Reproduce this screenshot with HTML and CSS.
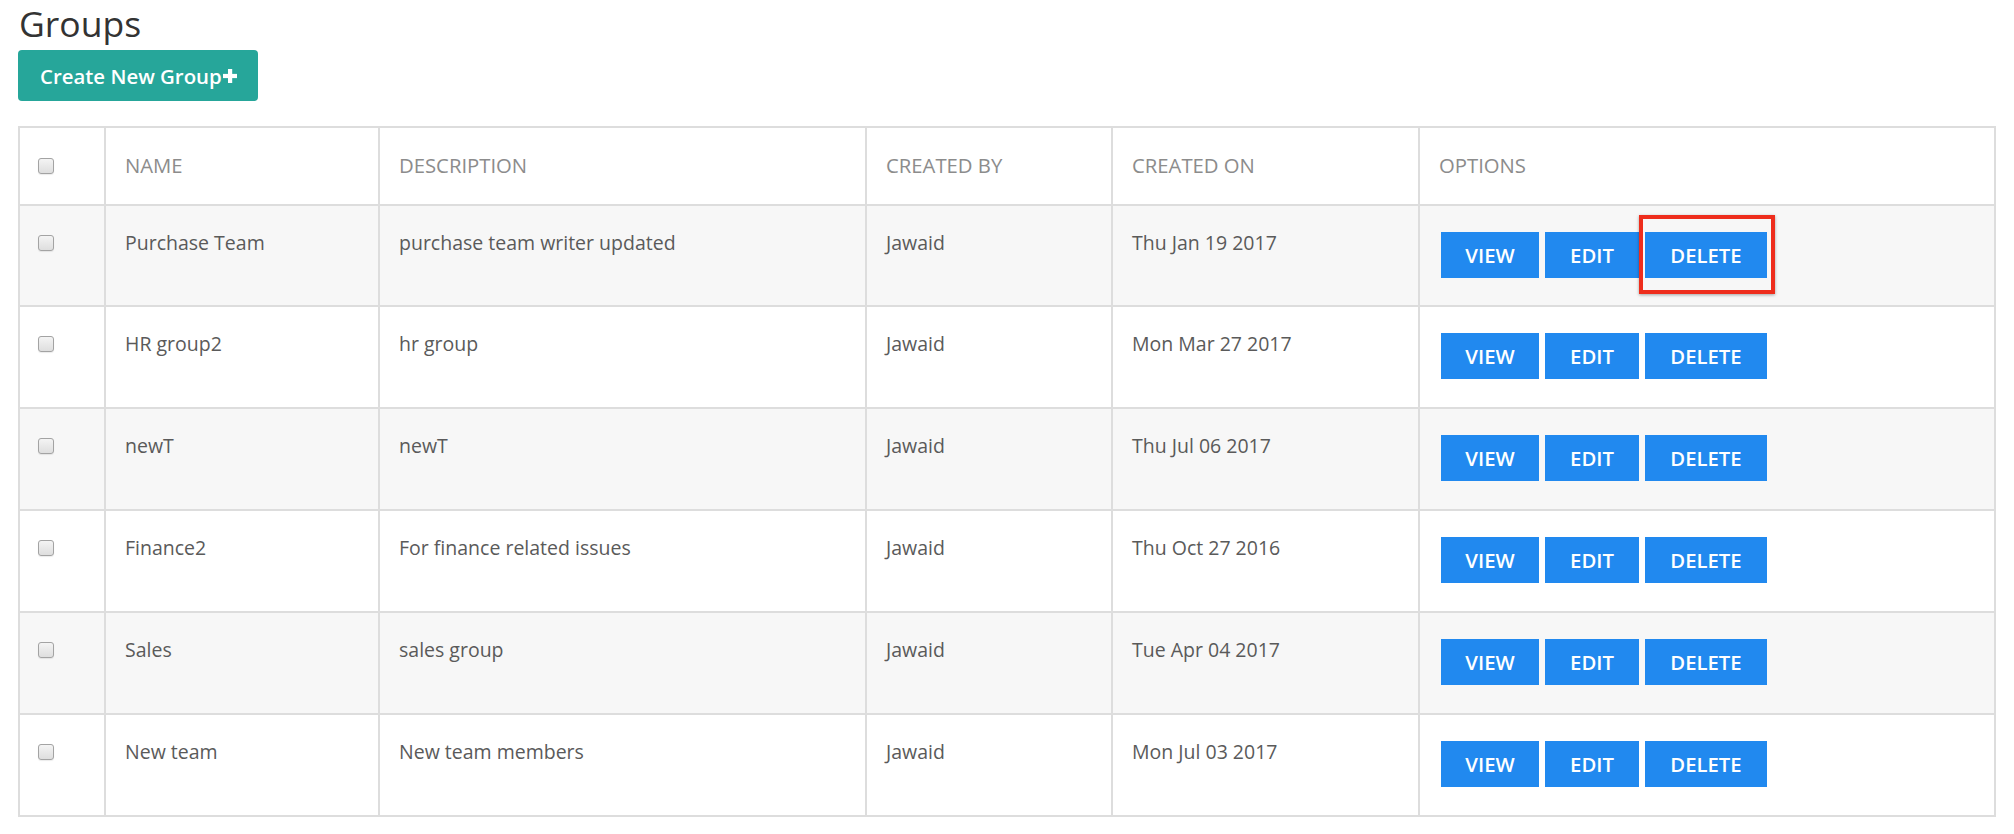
FILE: index.html
```html
<!DOCTYPE html>
<html>
<head>
<meta charset="utf-8">
<link rel="stylesheet" href="styles.css">
</head>
<body>
<div class="page">
  <h1 class="title">Groups</h1>
  <button class="create-btn">Create New Group<svg class="plus" viewBox="0 0 14 14" width="14" height="14"><rect x="5" y="0" width="4.2" height="14" fill="#fff"/><rect x="0" y="4.9" width="14" height="4.2" fill="#fff"/></svg></button>
  <table class="groups">
    <colgroup>
      <col class="c-check">
      <col class="c-name">
      <col class="c-desc">
      <col class="c-by">
      <col class="c-on">
      <col class="c-opt">
    </colgroup>
    <thead>
      <tr>
        <th class="chk"><input type="checkbox" class="cb"></th>
        <th>NAME</th>
        <th>DESCRIPTION</th>
        <th>CREATED BY</th>
        <th>CREATED ON</th>
        <th>OPTIONS</th>
      </tr>
    </thead>
    <tbody>
      <tr class="odd">
        <td class="chk"><input type="checkbox" class="cb"></td>
        <td>Purchase Team</td>
        <td>purchase team writer updated</td>
        <td>Jawaid</td>
        <td>Thu Jan 19 2017</td>
        <td class="opts"><div class="actions"><button class="btn w-view">VIEW</button><button class="btn w-edit">EDIT</button><span class="hl-wrap"><button class="btn w-del">DELETE</button><span class="highlight"></span></span></div></td>
      </tr>
      <tr>
        <td class="chk"><input type="checkbox" class="cb"></td>
        <td>HR group2</td>
        <td>hr group</td>
        <td>Jawaid</td>
        <td>Mon Mar 27 2017</td>
        <td class="opts"><div class="actions"><button class="btn w-view">VIEW</button><button class="btn w-edit">EDIT</button><button class="btn w-del">DELETE</button></div></td>
      </tr>
      <tr class="odd">
        <td class="chk"><input type="checkbox" class="cb"></td>
        <td>newT</td>
        <td>newT</td>
        <td>Jawaid</td>
        <td>Thu Jul 06 2017</td>
        <td class="opts"><div class="actions"><button class="btn w-view">VIEW</button><button class="btn w-edit">EDIT</button><button class="btn w-del">DELETE</button></div></td>
      </tr>
      <tr>
        <td class="chk"><input type="checkbox" class="cb"></td>
        <td>Finance2</td>
        <td>For finance related issues</td>
        <td>Jawaid</td>
        <td>Thu Oct 27 2016</td>
        <td class="opts"><div class="actions"><button class="btn w-view">VIEW</button><button class="btn w-edit">EDIT</button><button class="btn w-del">DELETE</button></div></td>
      </tr>
      <tr class="odd">
        <td class="chk"><input type="checkbox" class="cb"></td>
        <td>Sales</td>
        <td>sales group</td>
        <td>Jawaid</td>
        <td>Tue Apr 04 2017</td>
        <td class="opts"><div class="actions"><button class="btn w-view">VIEW</button><button class="btn w-edit">EDIT</button><button class="btn w-del">DELETE</button></div></td>
      </tr>
      <tr>
        <td class="chk"><input type="checkbox" class="cb"></td>
        <td>New team</td>
        <td>New team members</td>
        <td>Jawaid</td>
        <td>Mon Jul 03 2017</td>
        <td class="opts"><div class="actions"><button class="btn w-view">VIEW</button><button class="btn w-edit">EDIT</button><button class="btn w-del">DELETE</button></div></td>
      </tr>
    </tbody>
  </table>
</div>
</body>
</html>
```

FILE: styles.css
```css
* { box-sizing: border-box; }
html, body { margin: 0; padding: 0; background: #fff; }
body { font-family: "Open Sans", "Liberation Sans", sans-serif; }
.page { padding: 2px 20px 0 18px; }
.title {
  margin: 0 0 0 1px;
  font-size: 35.5px;
  line-height: 42px;
  font-weight: 400;
  color: #333;
}
.create-btn {
  display: flex;
  align-items: center;
  margin-top: 6px;
  height: 51px;
  width: 240px;
  padding: 0 0 0 22px;
  border: 0;
  border-radius: 4px;
  background: #26a69a;
  color: #fff;
  font-family: "Open Sans", "Liberation Sans", sans-serif;
  font-size: 20.4px;
  font-weight: 600;
}
.plus { margin-left: 1px; margin-top: 1px; }
.groups {
  margin-top: 25px;
  width: 1976px;
  border-collapse: collapse;
  table-layout: fixed;
  border: 2px solid #dddddd;
}
.c-check { width: 86px; }
.c-name { width: 274px; }
.c-desc { width: 487px; }
.c-by { width: 246px; }
.c-on { width: 307px; }
.c-opt { width: 576px; }
.groups th, .groups td {
  border: 2px solid #dddddd;
  text-align: left;
  font-size: 19.5px;
  line-height: 27px;
  padding: 0 19px;
}
.groups th {
  height: 77.6px;
  font-size: 20.3px;
  font-weight: 400;
  color: #8c8c8c;
  vertical-align: middle;
}
.groups td {
  height: 101.9px;
  color: #5a5a5a;
  vertical-align: top;
  padding-top: 23px;
}
.groups td.opts { padding-top: 24px; }
.groups tr.odd td { background: #f7f7f7; }
.groups .chk { padding-left: 18px; }
.cb {
  -webkit-appearance: none;
  appearance: none;
  display: block;
  width: 16px;
  height: 16px;
  margin: 0;
  border: 1px solid #a3a3a3;
  border-radius: 3px;
  background: linear-gradient(#f4f4f4, #dedede);
  box-shadow: 0 1px 1px rgba(0,0,0,0.08);
}
.groups td.chk .cb { margin-top: 6px; }
.actions {
  display: flex;
  gap: 6px;
  padding-top: 2px;
  margin-left: 2px;
}
.btn {
  height: 46px;
  border: 0;
  border-radius: 0;
  background: #2189ef;
  color: #fff;
  font-family: "Open Sans", "Liberation Sans", sans-serif;
  font-size: 20.3px;
  font-weight: 600;
  padding: 0;
  text-align: center;
}
.w-view { width: 98px; }
.w-edit { width: 94px; }
.w-del { width: 122px; }
.hl-wrap { position: relative; display: block; }
.hl-wrap .btn { display: block; }
.highlight {
  position: absolute;
  left: -6px;
  right: -8px;
  top: -17px;
  bottom: -16px;
  border: 4px solid #ee2d1c;
  box-shadow: 0 1px 3px rgba(0,0,0,0.35);
  pointer-events: none;
}
```
